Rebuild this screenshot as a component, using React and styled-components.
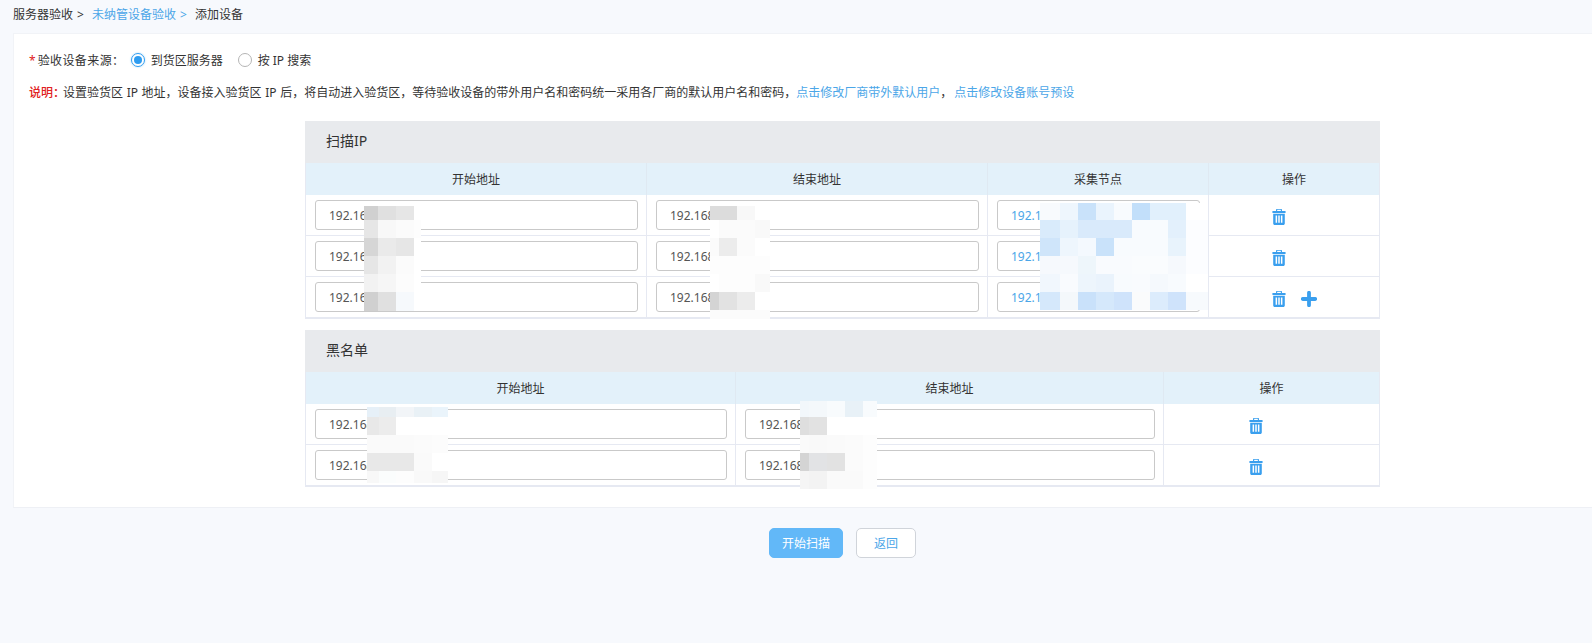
import React from "react";
import styled, { createGlobalStyle } from "styled-components";

const GlobalStyle = createGlobalStyle`
  html, body {
    margin: 0;
    padding: 0;
    background: #f7f9fd;
    font-family: "Noto Sans", "Noto Sans CJK SC", sans-serif;
    font-size: 12px;
    color: #333;
  }
  * { box-sizing: border-box; }
`;

const Page = styled.div`
  width: 1592px;
  height: 643px;
  overflow: hidden;
`;

const Breadcrumb = styled.div`
  height: 33px;
  padding: 6px 0 0 13px;
  line-height: 18px;
  display: flex;
  color: #333;
`;

const Crumb = styled.span`
  color: ${(props) => (props.$link ? "#4ba6e8" : "#333")};
  margin-right: 8px;
  word-spacing: 1px;
`;

const Card = styled.div`
  margin-left: 13px;
  padding: 17px 0 20px;
  background: #fff;
  border-top: 1px solid #f1f3f7;
  border-left: 1px solid #f1f3f7;
  border-bottom: 1px solid #eef0f5;
`;

const SourceRow = styled.div`
  display: flex;
  align-items: center;
  height: 18px;
  padding-left: 15px;
`;

const Star = styled.span`
  color: #e02020;
  margin-right: 2px;
`;

const SourceLabel = styled.span`
  width: 93px;
  letter-spacing: 0.4px;
`;

const RadioItem = styled.label`
  display: flex;
  align-items: center;
  gap: 6px;
  margin-right: 15px;
`;

const RadioMark = styled.span`
  width: 14px;
  height: 14px;
  border-radius: 50%;
  border: 1px solid ${(props) => (props.$on ? "#2d9cf0" : "#b5b5b5")};
  display: flex;
  align-items: center;
  justify-content: center;
  box-shadow: ${(props) => (props.$on ? "0 0 2px #9fd2f7" : "none")};

  &::after {
    content: "";
    display: ${(props) => (props.$on ? "block" : "none")};
    width: 8px;
    height: 8px;
    border-radius: 50%;
    background: #2d9cf0;
  }
`;

const Notice = styled.div`
  height: 18px;
  margin-top: 15px;
  padding-left: 15px;
  line-height: 18px;
  white-space: nowrap;
  word-spacing: 0.5px;
`;

const NoticeLabel = styled.span`
  color: #e02020;
  font-weight: 500;
  margin-right: -2px;
`;

const NoticeLink = styled.span`
  color: #4ba6e8;
  margin-left: ${(props) => props.$gap || 0}px;
`;

const Tables = styled.div`
  margin: 19px 0 0 291px;
  width: 1075px;
  display: flex;
  flex-direction: column;
  gap: 11px;
`;

const Panel = styled.section`
  position: relative;
  border: 1px solid #e6e9f2;
  border-top: 0;
`;

const PanelTitle = styled.div`
  height: 42px;
  line-height: 40px;
  padding-left: 21px;
  font-size: 14px;
  background: #e8eaed;
  margin: 0 -1px;
`;

const Row = styled.div`
  display: grid;
  grid-template-columns: ${(props) => props.$cols};
  height: ${(props) => (props.$head ? "32px" : "41px")};
  background: ${(props) => (props.$head ? "#e3f1fa" : "#fff")};
  border-bottom: ${(props) => (props.$head ? "0" : "1px solid #e6e9f2")};

  &:last-child {
    border-bottom: 0;
    height: 40px;
  }
`;

const HeadCell = styled.div`
  display: flex;
  align-items: center;
  justify-content: center;
  border-left: ${(props) => (props.$first ? "0" : "1px solid #dfe9f2")};
`;

const Cell = styled.div`
  display: flex;
  align-items: center;
  padding: 0 8px 0 9px;
  border-left: ${(props) => (props.$first ? "0" : "1px solid #e6e9f2")};
`;

const IpField = styled.input`
  width: 100%;
  height: 30px;
  padding: 0 13px;
  border: 1px solid #c9c9c9;
  border-radius: 3px;
  outline: none;
  background: #fff;
  font: inherit;
  color: ${(props) => (props.$link ? "#4ba6e8" : "#555")};
`;

const ActionCell = styled.div`
  display: flex;
  align-items: center;
  gap: 15px;
  padding: 3px 0 0 ${(props) => props.$pad}px;
  border-left: 1px solid #e6e9f2;
`;

const Mosaic = styled.div`
  position: absolute;
  left: ${(props) => props.$x}px;
  top: ${(props) => props.$y}px;
  display: grid;
  grid-template-columns: ${(props) => props.$cols};
  grid-template-rows: ${(props) => props.$rows};
`;

const Tile = styled.div`
  background: ${(props) => props.$c};
`;

const Footer = styled.div`
  display: flex;
  gap: 13px;
  margin-top: 20px;
  padding-left: 769px;
`;

const Button = styled.button`
  height: 30px;
  width: ${(props) => props.$w}px;
  border-radius: 5px;
  font: inherit;
  border: 1px solid ${(props) => (props.$primary ? "#62b8f8" : "#d0d4da")};
  background: ${(props) => (props.$primary ? "#62b8f8" : "#fff")};
  color: ${(props) => (props.$primary ? "#fff" : "#4ba6e8")};
  padding: 0;
`;

const TrashIcon = () => (
  <svg width="14" height="16" viewBox="0 0 14 16">
    <path d="M4.6 2V.9c0-.4.3-.7.7-.7h3.4c.4 0 .7.3.7.7V2" fill="none" stroke="#3a9fee" strokeWidth="1.1" />
    <rect x="0.4" y="2" width="13.2" height="2" rx="0.6" fill="#3a9fee" />
    <path
      d="M1.2 4.8h11.6v9.7c0 .8-.7 1.5-1.5 1.5H2.7c-.8 0-1.5-.7-1.5-1.5z M3.6 6.6v7.2h1.5V6.6z M6.25 6.6v7.2h1.5V6.6z M8.9 6.6v7.2h1.5V6.6z"
      fill="#3a9fee"
      fillRule="evenodd"
    />
  </svg>
);

const PlusIcon = () => (
  <svg width="16" height="16" viewBox="0 0 16 16">
    <path d="M8 1.8v12.4M1.8 8h12.4" stroke="#3a9fee" strokeWidth="3.8" strokeLinecap="round" />
  </svg>
);

const blurs = {
  scanStart: {
    x: 58, y: 85, cols: "14px 18px 18px 7px", rows: "14px 18px 18px 18px 18px 19px",
    cells: [
      "#d0d0d0", "#e0e0e0", "#e6e6e6", "#fff",
      "#e6e6e6", "#f8f8f8", "#fbfbfb", "#fdfdfd",
      "#d6d6d6", "#eaeaea", "#e6e6e6", "#fff",
      "#e6e6e6", "#f2f2f2", "#fbfbfb", "#fff",
      "#f2f2f2", "#f6f6f6", "#fcfcfc", "#fff",
      "#d0d0d0", "#e0e0e0", "#f6f9fc", "#fff",
    ],
  },
  scanEnd: {
    x: 404, y: 85, cols: "9px 18px 18px 15px", rows: "14px 18px 18px 18px 18px 18px 9px",
    cells: [
      "#dcdcdc", "#dcdcdc", "#f8f8f8", "#fff",
      "#fff", "#fbfbfb", "#fbfbfb", "#f9f9f9",
      "#fbfbfb", "#ececec", "#fbfbfb", "#fff",
      "#fdfdfd", "#fdfdfd", "#fdfdfd", "#fdfdfd",
      "#fff", "#fdfdfd", "#fdfdfd", "#f9f9f9",
      "#d4d4d4", "#e2e2e2", "#ececec", "#fff",
      "#fbfbfb", "#fbfbfb", "#fbfbfb", "#fbfbfb",
    ],
  },
  scanNode: {
    x: 734, y: 82, cols: "20px 18px 18px 18px 18px 18px 18px 18px 22px", rows: "17px 18px 18px 18px 18px 18px",
    cells: [
      "#f8fafd", "#eef6fd", "#c9e2fa", "#eaf4fd", "#f8fbfe", "#c2dffa", "#e1f0fc", "#e1f0fc", "#fff",
      "#d9ebfb", "#e6f2fc", "#d9eafb", "#d9eafb", "#d9eafb", "#f8fbfe", "#f8fbfe", "#e3f0fc", "#fcfdff",
      "#cfe5fa", "#eef6fd", "#f4f9fe", "#c9e2fa", "#f8fbfe", "#f8fbfe", "#f8fbfe", "#e8f3fc", "#fcfdff",
      "#f6f9fd", "#f6f9fd", "#eef6fb", "#f9fbfe", "#f9fbfe", "#fafcfe", "#fafcfe", "#f6f9fd", "#fcfdff",
      "#f1f7fd", "#f9fbfe", "#edf5fc", "#eaf3fc", "#f8fbfe", "#f9fbfe", "#f5f9fd", "#f8fbfe", "#fff",
      "#d5e8fb", "#f4f8fb", "#c9e1fa", "#d5e8fb", "#cfe3fb", "#fafbfc", "#dcecfc", "#cfe3fb", "#f7fafd",
    ],
  },
  blackStart: {
    x: 61, y: 77, cols: "12px 17px 18px 18px 16px", rows: "10px 18px 18px 18px 12px",
    cells: [
      "#e6f0f8", "#e8eef2", "#f2f5f8", "#e9f1f6", "#eaf4fb",
      "#e8e8e8", "#ececec", "#fff", "#fff", "#fff",
      "#fafafa", "#fafafa", "#fafafa", "#fbfbfb", "#fcfcfc",
      "#e8e8e8", "#e8e8e8", "#e8e8e8", "#fafafa", "#fff",
      "#f8f8f8", "#fbfdfd", "#fdfdfd", "#f9f9f9", "#f6f6f6",
    ],
  },
  blackEnd: {
    x: 494, y: 71, cols: "9px 18px 18px 18px 14px", rows: "16px 18px 18px 18px 18px",
    cells: [
      "#f2f7fb", "#f4f8fb", "#f8fbfd", "#e8f1f7", "#f8fbfd",
      "#dedede", "#e2e2e2", "#fff", "#fff", "#fff",
      "#fafafa", "#f9f9f9", "#fafafa", "#fbfbfb", "#fdfdfd",
      "#d4d4d4", "#e2e3e5", "#e2e2e2", "#fbfbfb", "#fdfdfd",
      "#f5f5f5", "#f3f3f3", "#fafafa", "#fafafa", "#fdfdfd",
    ],
  },
};

const Blur = ({ data }) => (
  <Mosaic $x={data.x} $y={data.y} $cols={data.cols} $rows={data.rows}>
    {data.cells.map((c, i) => (
      <Tile key={i} $c={c} />
    ))}
  </Mosaic>
);

const scanCols = "340px 341px 221px 1fr";
const blackCols = "429px 428px 1fr";

function ScanPanel() {
  const rows = [0, 1, 2];
  return (
    <Panel>
      <PanelTitle>扫描IP</PanelTitle>
      <Row $head $cols={scanCols}>
        <HeadCell $first>开始地址</HeadCell>
        <HeadCell>结束地址</HeadCell>
        <HeadCell>采集节点</HeadCell>
        <HeadCell>操作</HeadCell>
      </Row>
      {rows.map((r) => (
        <Row key={r} $cols={scanCols}>
          <Cell $first><IpField readOnly value="192.168" /></Cell>
          <Cell><IpField readOnly value="192.168" /></Cell>
          <Cell><IpField $link readOnly value="192.168" /></Cell>
          <ActionCell $pad={63}>
            <TrashIcon />
            {r === 2 && <PlusIcon />}
          </ActionCell>
        </Row>
      ))}
      <Blur data={blurs.scanStart} />
      <Blur data={blurs.scanEnd} />
      <Blur data={blurs.scanNode} />
    </Panel>
  );
}

function BlacklistPanel() {
  const rows = [0, 1];
  return (
    <Panel>
      <PanelTitle>黑名单</PanelTitle>
      <Row $head $cols={blackCols}>
        <HeadCell $first>开始地址</HeadCell>
        <HeadCell>结束地址</HeadCell>
        <HeadCell>操作</HeadCell>
      </Row>
      {rows.map((r) => (
        <Row key={r} $cols={blackCols}>
          <Cell $first><IpField readOnly value="192.168" /></Cell>
          <Cell><IpField readOnly value="192.168" /></Cell>
          <ActionCell $pad={85}>
            <TrashIcon />
          </ActionCell>
        </Row>
      ))}
      <Blur data={blurs.blackStart} />
      <Blur data={blurs.blackEnd} />
    </Panel>
  );
}

export default function App() {
  return (
    <Page>
      <GlobalStyle />
      <Breadcrumb>
        <Crumb>服务器验收 &gt;</Crumb>
        <Crumb $link>未纳管设备验收 &gt;</Crumb>
        <Crumb>添加设备</Crumb>
      </Breadcrumb>
      <Card>
        <SourceRow>
          <Star>*</Star>
          <SourceLabel>验收设备来源：</SourceLabel>
          <RadioItem>
            <RadioMark $on />
            到货区服务器
          </RadioItem>
          <RadioItem>
            <RadioMark />
            按 IP 搜索
          </RadioItem>
        </SourceRow>
        <Notice>
          <NoticeLabel>说明：</NoticeLabel>
          设置验货区 IP 地址，设备接入验货区 IP 后，将自动进入验货区，等待验收设备的带外用户名和密码统一采用各厂商的默认用户名和密码，
          <NoticeLink>点击修改厂商带外默认用户</NoticeLink>，
          <NoticeLink $gap={2}>点击修改设备账号预设</NoticeLink>
        </Notice>
        <Tables>
          <ScanPanel />
          <BlacklistPanel />
        </Tables>
      </Card>
      <Footer>
        <Button $primary $w={74}>开始扫描</Button>
        <Button $w={60}>返回</Button>
      </Footer>
    </Page>
  );
}
